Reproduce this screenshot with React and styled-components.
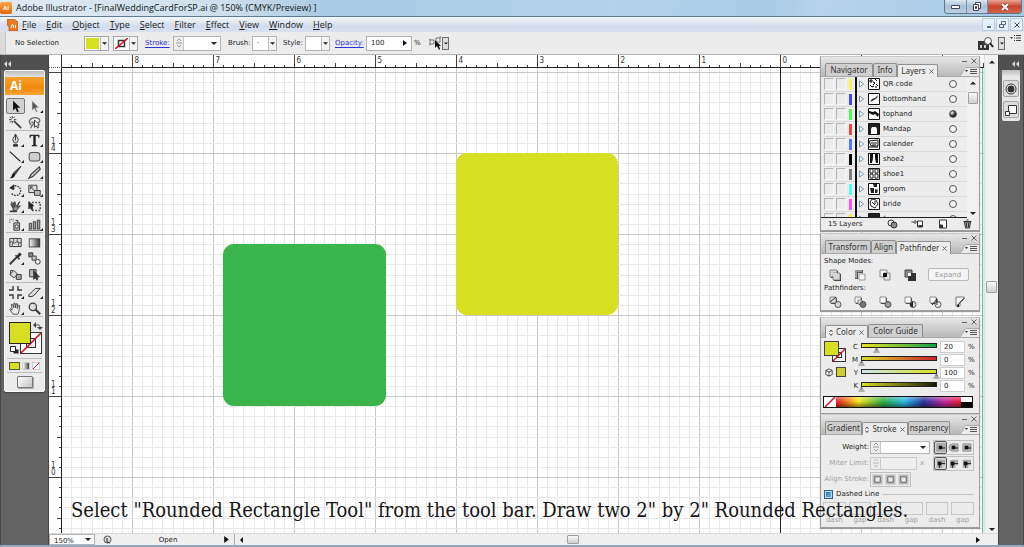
import React, { useLayoutEffect, useRef, useState } from "react";
import styled, { createGlobalStyle, css } from "styled-components";

const Global = createGlobalStyle`
  *, *::before, *::after { box-sizing: border-box; }
  html, body, #root { height: 100%; margin: 0; }
  body { font: 7px/12px "DejaVu Sans", sans-serif; color: #1c1c1c; overflow: hidden; }
  button, input, select { font: inherit; color: inherit; margin: 0; padding: 0; border: 0; background: none; }
  svg { display: block; flex: none; }
  h1, ul { margin: 0; padding: 0; font: inherit; list-style: none; }
`;

const lime = "#d7df23";
const green = "#39b54a";

/* ---------- shell ---------- */

const Window = styled.div`
  position: relative;
  display: flex;
  flex-direction: column;
  min-height: 100vh;
  background: #ebebeb;
`;

const TitleBar = styled.header`
  display: flex;
  align-items: center;
  gap: 4px;
  height: 17px;
  border-bottom: 1px solid #5e7a94;
  background: linear-gradient(100deg, #dfe9f2 0, #cfdfec 22%, #a8cae4 32%, #b3d3ec 60%, #a9cbe6 75%, #b6d4ec 80%, #a5c8e5 100%);
  font: 9px/14px "Open Sans", sans-serif;
  color: #101820;
`;

const AppBadge = styled.span`
  width: 12px;
  height: 12px;
  border-radius: 2px;
  background: linear-gradient(#f7a548, #e2680c);
  color: #fff;
  font: bold 6px/12px "Open Sans", sans-serif;
  text-align: center;
`;

const Title = styled.h1`
  flex: 1;
  white-space: nowrap;
`;

const WindowButtons = styled.div`
  display: flex;
  align-self: flex-start;
  margin-right: 2px;
  border: 1px solid #5f7487;
  border-top: 0;
  border-radius: 0 0 4px 4px;
  overflow: hidden;
`;

const WindowButton = styled.button`
  display: grid;
  place-items: center;
  width: ${(p) => (p.$close ? 34 : 21)}px;
  height: 13px;
  border-left: ${(p) => (p.$first ? 0 : "1px solid #7b90a5")};
  background: ${(p) =>
    p.$close
      ? "linear-gradient(#e9a595, #c9442b 50%, #d2664c)"
      : "linear-gradient(#dbe7f2, #a9bfd5 50%, #bdd2e6)"};
`;

const MenuBar = styled.nav`
  display: flex;
  align-items: center;
  height: 15px;
  padding: 0 1px 0 7px;
  background: linear-gradient(#f4f8fd, #d4dcec 60%, #d9e1f0);
  font: 9px/14px "Open Sans", sans-serif;
`;

const Menus = styled.ul`
  display: flex;
  flex: 1;
  gap: 10px;
  padding-left: 4px;
`;

const MenuItem = styled.button`
  line-height: 14px;
  &::first-letter { text-decoration: underline; }
`;

const DocButton = styled.button`
  display: grid;
  place-items: center;
  width: 13px;
  height: 13px;
  margin-left: 1px;
  border: 1px solid #b5cbe2;
  background: #e6f1fb;
`;

const OptionsBar = styled.div`
  display: flex;
  align-items: center;
  height: 23px;
  padding: 0 2px 0 0;
  border-bottom: 1px solid #b4b4b4;
  background: #ececec;
`;

const Grip = styled.span`
  align-self: stretch;
  width: 6px;
  margin-right: 9px;
  border-right: 1px solid #c8c8c8;
  background: #dcdcdc;
`;

const OptionLabel = styled.label`
  width: ${(p) => p.$w}px;
  white-space: nowrap;
  ${(p) => p.$link && css`
    color: #2734d8;
    text-decoration: underline;
    text-underline-offset: 2px;
  `}
`;

const SwatchPicker = styled.button`
  display: flex;
  width: 25px;
  height: 15px;
  margin-right: ${(p) => p.$gap}px;
  border: 1px solid #a9a9a9;
  background: #fff;
`;

const SwatchFace = styled.span`
  display: grid;
  place-items: center;
  align-self: stretch;
  flex: 1;
  border: 1px solid #fff;
  background: ${(p) => p.$fill || "#fff"};
`;

const ArrowBox = styled.span`
  display: grid;
  place-items: center;
  align-self: stretch;
  width: 8px;
  border-left: 1px solid #bdbdbd;
  background: #f3f3f3;
`;

const Combo = styled.span`
  display: flex;
  align-items: center;
  width: ${(p) => p.$w}px;
  height: ${(p) => p.$h || 15}px;
  margin-right: ${(p) => p.$gap || 0}px;
  border: 1px solid ${(p) => (p.$off ? "#cacaca" : "#b2b2b2")};
  background: ${(p) => (p.$off ? "#eeeeee" : "#fff")};
  & > select, & > input { flex: 1; width: 0; min-width: 0; height: 100%; padding-left: 4px; appearance: none; }
`;

const Spin = styled.span`
  display: grid;
  place-items: center;
  align-self: stretch;
  width: 10px;
  margin-right: 2px;
  border-right: 1px solid #c8c8c8;
  background: #ededed;
`;

const TinyDrop = styled.button`
  display: grid;
  place-items: center;
  width: 7px;
  height: 13px;
  border: 1px solid #6d6d6d;
  background: #dedede;
`;

const Spacer = styled.span`
  flex: ${(p) => p.$grow || 1};
`;

const Body = styled.div`
  display: flex;
  flex: 1;
  min-height: 0;
`;

const TaskEdge = styled.div`
  height: 2px;
  background: #93a9bd;
`;

/* ---------- left dock ---------- */

const Dock = styled.aside`
  width: ${(p) => p.$w}px;
  flex: none;
  padding: 0 3px;
  border-left: 1px solid #474747;
  border-right: 1px solid #474747;
  background: #636363;
`;

const DockHead = styled.div`
  display: flex;
  align-items: center;
  justify-content: ${(p) => (p.$right ? "flex-end" : "flex-start")};
  height: 15px;
  margin: 0 -3px;
  padding: 2px 3px 0;
  background: #505050;
`;

const ToolPanel = styled.div`
  border: 1px solid #f8f8f8;
  border-radius: 2px;
  background: #ebebeb;
  box-shadow: 0 1px 1px #444;
`;

const PanelGrip = styled.div`
  height: 6px;
  background: linear-gradient(#bdbdbd, #e2e2e2);
`;

const Brand = styled.div`
  height: 18px;
  margin-bottom: 2px;
  padding-left: 5px;
  background: linear-gradient(#f7a12c, #f28a0a 60%, #f7a63c);
  color: #fff;
  font: bold 12px/18px "Open Sans", sans-serif;
`;

const ToolGroup = styled.div`
  display: grid;
  grid-template-columns: 19px 19px;
  justify-content: center;
  margin: 0 1px;
  padding: 1px 0 0;
  border-bottom: 1px solid #bcbcbc;
`;

const Tool = styled.button`
  position: relative;
  display: grid;
  place-items: center;
  height: 16px;
  border-radius: 2px;
  ${(p) => p.$on && css`
    border: 1px solid #777;
    background: #d2d2d2;
  `}
  ${(p) => p.$more && css`
    &::after {
      content: "";
      position: absolute;
      right: 1px;
      bottom: 1px;
      border-left: 3px solid transparent;
      border-bottom: 3px solid #222;
    }
  `}
`;

const PaintArea = styled.div`
  display: grid;
  place-items: center;
  height: 42px;
  margin: 0 2px;
  border-bottom: 1px solid #bcbcbc;
`;

const PaintModes = styled.div`
  display: flex;
  justify-content: space-evenly;
  align-items: center;
  height: 14px;
  margin: 0 2px;
  border-bottom: 1px solid #bcbcbc;
`;

const PaintMode = styled.button`
  width: ${(p) => (p.$on ? 11 : 8)}px;
  height: 8px;
  border: 1px solid ${(p) => (p.$on ? "#555" : "#ccc")};
  background: ${(p) => p.$bg};
`;

const ScreenModeRow = styled.div`
  display: grid;
  place-items: center;
  height: 18px;
`;

const ScreenMode = styled.button`
  width: 16px;
  height: 12px;
  border: 1px solid #777;
  border-radius: 1px;
  background: linear-gradient(135deg, #fff, #c4c4c4);
  box-shadow: 1px 1px 0 #aaa;
`;

/* ---------- document ---------- */

const Document = styled.main`
  position: relative;
  display: grid;
  grid-template: 13px 1fr 12px / 13px 1fr 14px;
  flex: 1;
  min-width: 0;
  min-height: 490px;
  background: #fff;
`;

const RulerCorner = styled.span`
  border-right: 1px solid #333;
  border-bottom: 1px dotted #555;
`;

const CanvasCell = styled.div`
  position: relative;
  min-width: 0;
  min-height: 0;
  overflow: hidden;
  & > svg { position: absolute; inset: 0; width: 100%; height: 100%; font: 8px "DejaVu Sans Condensed", sans-serif; }
`;

const ScrollColumn = styled.div`
  display: flex;
  flex-direction: column;
  align-items: center;
  grid-row: 1 / 3;
  grid-column: 3;
  padding: 5px 0 2px;
  border-left: 1px solid #e2e2e2;
  background: #f1f1f1;
`;

const Thumb = styled.span`
  width: ${(p) => p.$w}px;
  height: ${(p) => p.$h}px;
  border: 1px solid #9f9f9f;
  border-radius: 1px;
  background: linear-gradient(#fafafa, #cfcfcf);
`;

const StatusBar = styled.footer`
  grid-column: 1 / 4;
  display: flex;
  align-items: center;
  border-top: 1px solid #dadada;
  background: #efefef;
`;

const StatusText = styled.span`
  flex: none;
  width: 112px;
  text-align: center;
`;

const ScrollRow = styled.div`
  display: flex;
  flex: 1;
  align-items: center;
  align-self: stretch;
  margin-left: 5px;
  padding: 0 18px 0 4px;
  border-left: 1px solid #aaa;
`;

const Caption = styled.p`
  position: absolute;
  left: 71px;
  bottom: 23px;
  margin: 0;
  color: #161616;
  font: 20px/28px "DejaVu Serif Condensed", "DejaVu Serif", serif;
  white-space: nowrap;
  pointer-events: none;
`;

/* ---------- floating panels ---------- */

const Floating = styled.div`
  position: absolute;
  top: 1px;
  right: 18px;
  display: flex;
  flex-direction: column;
  width: 160px;
`;

const Panel = styled.section`
  height: ${(p) => p.$h}px;
  margin-bottom: ${(p) => p.$gap || 0}px;
  border: 1px solid #9e9e9e;
  border-top-color: #c9c9c9;
  background: #ececec;
  box-shadow: 0 1px 1px #999;
`;

const PanelHead = styled.div`
  display: flex;
  align-items: flex-end;
  height: 20px;
  padding-left: 4px;
  border-bottom: 1px solid #a8a8a8;
  background: linear-gradient(#e6e6e6, #b9b9b9);
`;

const Tab = styled.button`
  display: flex;
  align-items: center;
  justify-content: center;
  gap: 3px;
  width: ${(p) => p.$w}px;
  height: 13px;
  margin-bottom: ${(p) => (p.$on ? -1 : 0)}px;
  border: 1px solid #8f8f8f;
  border-bottom: 0;
  border-radius: 2px 2px 0 0;
  background: ${(p) => (p.$on ? "#ececec" : "#cfcfcf")};
  color: #333;
  font: 8px/12px "Noto Sans", sans-serif;
  white-space: nowrap;
`;

const HeadTools = styled.div`
  display: flex;
  flex-direction: column;
  align-items: flex-end;
  justify-content: space-between;
  align-self: stretch;
  flex: 1;
  padding-top: 1px;
  & > :first-child { margin-right: 2px; }
`;

const Layers = styled.div`
  display: flex;
  height: 141px;
`;

const LayerList = styled.ul`
  flex: 1;
  padding-left: 3px;
  overflow: hidden;
  border-bottom: 1px solid #222;
`;

const LayerRow = styled.li`
  display: flex;
  align-items: center;
  height: 15px;
  border-bottom: 1px solid #d9d9d9;
`;

const LayerToggle = styled.input`
  appearance: none;
  width: 10px;
  height: 12px;
  margin-right: 2px;
  border: 1px solid #b5b5b5;
  border-right-color: #f8f8f8;
  border-bottom-color: #f8f8f8;
`;

const LayerTint = styled.span`
  width: 3px;
  height: 11px;
  margin-left: 1px;
  background: ${(p) => p.$c};
`;

const LayerArrow = styled.button`
  display: grid;
  place-items: center;
  width: 10px;
  height: 15px;
  margin: 0 3px 0 3px;
  border-left: 2px solid #111;
`;

const LayerName = styled.span`
  flex: 1;
  padding-left: 3px;
`;

const LayerTarget = styled.button`
  width: 8px;
  height: 8px;
  margin-right: 10px;
  border: 1px solid #555;
  border-radius: 50%;
  background: ${(p) => (p.$on ? "radial-gradient(circle at 35% 30%, #fff, #222 55%)" : "#f4f4f4")};
`;

const ListScroll = styled.div`
  display: flex;
  flex-direction: column;
  align-items: center;
  width: 12px;
  padding: 4px 0 3px;
  background: #f0f0f0;
`;

const LayerFoot = styled.div`
  display: flex;
  align-items: center;
  gap: 12px;
  height: 12px;
  padding: 0 18px 0 7px;
  white-space: nowrap;
`;

const PathfinderBody = styled.div`
  display: grid;
  grid-template-columns: repeat(6, 25px);
  align-items: center;
  justify-items: center;
  row-gap: 1px;
  padding: 1px 4px 0 2px;
`;

const PathHeading = styled.span`
  grid-column: 1 / -1;
  justify-self: start;
  padding-left: 1px;
`;

const IconButton = styled.button`
  display: grid;
  place-items: center;
  height: 13px;
  min-width: 13px;
  ${(p) => p.$on && css`
    border: 1px solid #555;
    border-radius: 2px;
    background: #d4d4d4;
  `}
`;

const Expand = styled.button`
  grid-column: span 2;
  width: 41px;
  height: 13px;
  border: 1px solid #b8b8b8;
  border-radius: 2px;
  background: #f4f4f4;
  color: #999;
`;

const ColorBody = styled.div`
  display: grid;
  grid-template-columns: 24px 1fr;
  padding: 2px 4px 0 3px;
`;

const ColorProxy = styled.div`
  display: flex;
  flex-direction: column;
  gap: 4px;
`;

const GamutRow = styled.div`
  display: flex;
  align-items: center;
  gap: 3px;
  padding-left: 1px;
`;

const GamutColor = styled.button`
  width: 10px;
  height: 10px;
  border: 1px solid #444;
  background: #cfce2c;
`;

const Channel = styled.div`
  display: grid;
  grid-template-columns: 8px 82px 25px 1fr;
  align-items: center;
  height: 13px;
  padding-left: 2px;
`;

const ChannelLabel = styled.label`
  text-align: right;
`;

const Percent = styled.span`
  padding-left: 3px;
`;

const Slider = styled.input`
  appearance: none;
  width: 82px;
  height: 12px;
  &::-webkit-slider-runnable-track {
    height: 12px;
    background:
      linear-gradient(90deg, ${(p) => p.$from}, ${(p) => p.$to}) 4px 3px / 74px 3px no-repeat,
      linear-gradient(#222, #222) 3px 2px / 76px 5px no-repeat;
  }
  &::-webkit-slider-thumb {
    appearance: none;
    width: 7px;
    height: 5px;
    margin-top: 7px;
    background: linear-gradient(#777 40%, #aaa 40% 80%, #777 80%);
    clip-path: polygon(50% 0, 100% 100%, 0 100%);
  }
`;

const Field = styled.input`
  && {
    width: 100%;
    height: 12px;
    padding-left: 3px;
    border: 1px solid #cfcfcf;
    background: #fff;
  }
`;

const Spectrum = styled.div`
  display: flex;
  height: 12px;
  margin: 4px 6px 0 2px;
  border: 1px solid #111;
`;

const SpectrumRamp = styled.span`
  flex: 1;
  background:
    linear-gradient(rgba(255,255,255,.35), transparent 45%, rgba(0,0,0,.45)),
    linear-gradient(90deg, #ea1c2c, #f7e51d 18%, #2fae4a 38%, #2fb9e8 55%, #2b36a0 70%, #c62b9c 87%, #ec1c34);
`;

const BlackWhite = styled.span`
  width: 11px;
  background: linear-gradient(#fff 50%, #000 50%);
`;

const StrokeBody = styled.div`
  display: flex;
  flex-direction: column;
  gap: 2px;
  padding: 5px 5px 0 2px;
`;

const StrokeRow = styled.div`
  display: flex;
  align-items: center;
  height: 14px;
  color: ${(p) => (p.$off ? "#a2a2a2" : "#1c1c1c")};
`;

const StrokeLabel = styled.label`
  width: 46px;
  margin-right: 1px;
  text-align: right;
  white-space: nowrap;
`;

const JoinGroup = styled.span`
  display: flex;
  margin-left: ${(p) => (p.$push ? "auto" : 0)};
  border: 1px solid #c0c0c0;
`;

const Dashed = styled.label`
  display: flex;
  align-items: center;
  gap: 3px;
  height: 12px;
  &::after { content: ""; flex: 1; border-top: 1px solid #c4c4c4; }
`;

const DashedBox = styled.input`
  && {
    appearance: none;
    width: 9px;
    height: 9px;
    margin-left: 1px;
    border: 1px solid #3a5f80;
    background: linear-gradient(135deg, #2a6aa0, #5fc3ee);
    box-shadow: inset 0 0 0 1px #b8dcf0;
  }
`;

const DashGrid = styled.div`
  display: grid;
  grid-template-columns: repeat(6, 1fr);
  gap: 3px;
`;

const DashCell = styled.label`
  display: flex;
  flex-direction: column;
  color: #a2a2a2;
  text-align: center;
  line-height: 11px;
`;

const DashInput = styled.input`
  && {
    width: 100%;
    height: 13px;
    border: 1px solid #c6c6c6;
  }
`;

/* ---------- right dock ---------- */

const RightGroup = styled.div`
  display: flex;
  flex-direction: column;
  align-items: center;
  gap: 4px;
  padding-bottom: 3px;
  border-radius: 2px;
  background: #e6e6e6;
  & > :first-child { align-self: stretch; }
`;

const RightButton = styled.button`
  display: grid;
  place-items: center;
  width: 16px;
  height: 17px;
  border: 1px solid #a5a5a5;
  border-radius: 2px;
  background: #dcdcdc;
`;

/* ---------- drawings ---------- */

const Down = ({ s = 5, c = "#222" }) => (
  <svg width={s} height="3" viewBox="0 0 6 3"><path d="M0 0h6L3 3z" fill={c} /></svg>
);
const Up = () => <svg width="6" height="4" viewBox="0 0 6 3"><path d="M0 3h6L3 0z" fill="#222" /></svg>;
const Side = ({ left, s = 5 }) => (
  <svg width={s} height={s + 2} viewBox="0 0 4 6"><path d={left ? "M4 0v6L1 3z" : "M0 0v6l4-3z"} fill="#111" /></svg>
);
const SpinMark = ({ off }) => (
  <svg width="6" height="10" viewBox="0 0 6 10" fill="none" stroke={off ? "#aaa" : "#888"}>
    <path d="M1 3l2-2 2 2M1 7l2 2 2-2M0 5h6" strokeWidth=".8" />
  </svg>
);
const Cross = ({ c = "#555", s = 5 }) => (
  <svg width={s} height={s} viewBox="0 0 6 6"><path d="M.5.5l5 5M5.5.5l-5 5" stroke={c} /></svg>
);
const Chevrons = () => (
  <svg width="8" height="6" viewBox="0 0 8 6"><path d="M3 0v6L0 3zM7 0v6L4 3z" fill="#dcdcdc" /></svg>
);
const MenuMark = () => (
  <svg width="20" height="9" viewBox="0 0 20 9">
    <path d="M0 9c4 0 4-9 8-9h12v9z" fill="#ececec" />
    <path d="M0 9c4 0 4-8.500 8-8.500h12" fill="none" stroke="#aaa" />
    <path d="M6 3h3L7.500 5z" fill="#333" /><path d="M11 2.500h7M11 4.500h7M11 6.500h7" stroke="#555" />
  </svg>
);

const dark = { fill: "none", stroke: "#3c3c3c", strokeWidth: 1.2 };
const tools = {
  selection: <path d="M5 1v12l3-3 2 5 2-1-2-4.500h4z" fill="#111" />,
  direct: <path d="M5 1v12l3-3 2 5 1.500-.7-2-4.800h4z" fill="#555" stroke="#ddd" strokeWidth=".6" />,
  wand: <g {...dark}><path d="M6 6l9 9" strokeWidth="2" /><path d="M4 0v3M4 6v3M0 4.500h3M6 4.500h3M1 1l2 2M7 1L5.500 2.500M1 8l2-2" /></g>,
  lasso: <g {...dark}><path d="M4 11C-1 7 3 2 9 2c6 0 7 5 3 7M4 8c2-1 4 1 2 3s-3 2-2 4" strokeWidth="1.600" stroke="#666" /><path d="M8 5v9l2-2 2 3 1-1-1-3h2z" fill="#fff" /></g>,
  pen: <g {...dark}><path d="M8 0v8M8 0L4.500 7l2 4h3l2-4z" fill="#ddd" /><path d="M5.500 13h5v2h-5z" fill="#222" /></g>,
  type: <path d="M2 1h12v4h-1c0-2-1-3-3.500-3v11c0 .7.500 1 2 1.200V15h-7v-.8c1.500-.2 2-.5 2-1.200V2C4 2 3 3 3 5H2z" fill="#222" />,
  line: <path d="M1 2l13 12" stroke="#222" strokeWidth="1.500" />,
  rect: <rect x="1.500" y="3" width="13" height="10.500" rx="3" fill="#cfcfcf" stroke="#555" strokeWidth="1.300" />,
  brush: <g><path d="M15 0L6 8l2 2z" fill="#555" stroke="#222" /><path d="M6 8l2 2c-1 4-4 5-7 5 3-2 2-5 5-7z" fill="#222" /></g>,
  pencil: <path d="M14 1L4 10l-3 5 5-2 9-9z" fill="#c8c8c8" stroke="#333" strokeWidth="1.300" />,
  rotate: <g {...dark}><path d="M4 4a6 6 0 1 1-1 7" strokeDasharray="2 1.300" strokeWidth="1.700" /><path d="M1 5l5-4v6z" fill="#222" /></g>,
  scale: <g {...dark}><path d="M1 1.500h10v9H1z" fill="#ddd" /><path d="M8 8h7v6H8z" fill="#bbb" /><path d="M3 3.500l5 5M3 3.500v3M3 3.500h3" /></g>,
  warp: <g {...dark}><path d="M2 5l3 5-2-8M5 3l2 6V2l2 6 4-6-3 7 4-2-5 6H5z" fill="#999" /><path d="M1 14h9" strokeWidth="2" /></g>,
  free: <g {...dark}><path d="M5 3h10v10H5z" strokeDasharray="2 2" strokeWidth="1.700" /><path d="M1 2l6 5-2 1 1 4-2 0-1-3-2 2z" fill="#222" /></g>,
  symbol: <g {...dark}><path d="M6 6h7v9H6zM8 3h3v3" fill="#bbb" /><path d="M1 1v5M3 1v2M5 1v3" strokeDasharray="1 1" /><circle cx="9.500" cy="10.500" r="2" fill="#eee" /></g>,
  graph: <g fill="#999" stroke="#333"><path d="M1.500 6.500h3v7h-3zM6.500 4.500h3v9h-3zM11.500 2.500h3v11h-3zM0 15h16" /></g>,
  mesh: <g {...dark}><path d="M1 3h14v10H1z" fill="#ddd" /><path d="M5 3c3 4-3 6 0 10M11 3c-3 4 3 6 0 10M1 8c4-3 4 3 7 0s4 2 7 0" /></g>,
  gradient: <g><rect x="1.500" y="3.500" width="13" height="10" fill="url(#toolShade)" stroke="#333" /></g>,
  dropper: <g {...dark}><path d="M10 6L3 13l-2 2" strokeWidth="2.500" /><path d="M8 4l5 5" strokeWidth="2" /><path d="M10 5l3-4 2 2-4 4z" fill="#222" /></g>,
  blend: <g {...dark}><path d="M1 1h5v5H1z" fill="#888" /><path d="M5 5h5v5H5z" fill="#ccc" /><circle cx="12" cy="12" r="3" fill="#eee" /></g>,
  bucket: <g {...dark}><path d="M1 8l5-5 5 5-5 4z" fill="#ddd" /><path d="M9 8h6v6H9z" fill="#aaa" /><path d="M2 8V3h3" /></g>,
  livesel: <g {...dark}><path d="M2 2h8v9H2z" fill="#bbb" /><path d="M7 3v11l2-2 2 3 1-1-1-3h3z" fill="#333" /></g>,
  slice: <g {...dark} strokeWidth="1.700"><path d="M5 0v5H0M11 0v5h5M5 16v-5H0M11 16v-5h5" /></g>,
  eraser: <path d="M1 11l8-8h6l-7 8-3 2H1z" fill="#ddd" stroke="#333" strokeWidth="1.200" />,
  hand: <path d="M5 15l-4-6 1-1 2 2-1-7 1.500 0L6 7V1.500h1.500L8 7l1-5 1.500.3L10 8l2-4 1.300.6L12 12l-1 3z" fill="#eee" stroke="#333" />,
  zoom: <g {...dark}><circle cx="6" cy="6" r="4.500" fill="#ddd" strokeWidth="1.500" /><path d="M9 9l6 6" strokeWidth="2.700" /></g>,
};

const ToolIcon = ({ name }) => (
  <svg width="13" height="13" viewBox="0 0 16 16">
    <defs><linearGradient id="toolShade"><stop offset="0" stopColor="#fff" /><stop offset="1" stopColor="#333" /></linearGradient></defs>
    {tools[name]}
  </svg>
);

const toolGroups = [
  ["selection", "direct+", "wand", "lasso"],
  ["pen+", "type+", "line+", "rect+", "brush", "pencil+"],
  ["rotate+", "scale+", "warp+", "free"],
  ["symbol+", "graph+"],
  ["mesh", "gradient", "dropper+", "blend", "bucket", "livesel"],
  ["slice+", "eraser+", "hand+", "zoom"],
];

const thumbs = {
  qr: <path d="M2 2h2v2H2zM7 1l2 2M5 4l2 1-2 2M8 6l2 2M2 7l2 2 2-1M7 9h2" stroke="#000" fill="none" />,
  up: <path d="M2 9l2-3 3-1 3-3-1 3-3 2-2 1z" fill="#222" />,
  down: <path d="M1 3l4 1 2-1 4 3-1 3-3-3-2 1-4-2z" fill="#111" />,
  gate: <path d="M1 1h10v10H9V6L8 4H4L3 6v5H1z" fill="#222" />,
  cal: <path d="M1 3l9-1v6H3zM3 5h6M4 7h4M1 9h9" stroke="#111" fill="none" />,
  shoes: <path d="M2 1h3v4L4 10H2zM7 1h3v9H8L7 5z" fill="#111" />,
  shoesLine: <path d="M2 1h3v4H2zM2 6h3v4H2zM7 1h3v4H7zM7 6h3v4H7z" fill="none" stroke="#222" />,
  man: <path d="M5 1h4v3H6zM2 5h4v5H3zM7 6l3 1-1 3H7z" fill="#222" />,
  woman: <path d="M4 1l4 1 2 4-3 4-4-2-1-4zM4 4l3 3M7 3v3" fill="none" stroke="#222" />,
};

const layers = [
  ["QR code", "#fbf04a", "qr"],
  ["bottomhand", "#3f4fe0", "up"],
  ["tophand", "#4aff4f", "down", true],
  ["Mandap", "#f2443f", "gate"],
  ["calender", "#4f7cff", "cal"],
  ["shoe2", "#000000", "shoes"],
  ["shoe1", "#7f7f7f", "shoesLine"],
  ["groom", "#4bfff0", "man"],
  ["bride", "#ff4ff8", "woman"],
  ["f", "#fbf04a", "gate"],
];

const Square = ({ x, y, s = 6, fill }) => (
  <>
    <path d={`M${x + 1} ${y + 1}h${s}v${s}h-${s}z`} fill="#333" />
    <path d={`M${x} ${y}h${s}v${s}h-${s}z`} fill={fill} stroke="#777" strokeWidth=".8" />
  </>
);
const Disc = ({ fill }) => <circle cx="9" cy="8.500" r="3" fill={fill} stroke="#555" />;

const shapes = {
  add: <><Square x={1} y={1} s={7} fill="#d6d6d6" /><Square x={4} y={4} s={7} fill="#d6d6d6" /><path d="M2 4h6v4H5z" fill="#d6d6d6" /></>,
  cut: <><path d="M1 1h8v3H4v6H1z" fill="#555" /><path d="M1 1h7v2H3v6H1z" fill="#999" /><path d="M5 5h6v6H5z" fill="#f7f7f7" stroke="#999" /></>,
  meet: <><path d="M1 1h7v7H1z" fill="#f3f3f3" stroke="#888" /><path d="M5 4h6v7H5z" fill="#e3e3e3" stroke="#888" /><path d="M4 4h4v4H4z" fill="#111" /></>,
  omit: <><path d="M1 1h7v7H1z" fill="#888" stroke="#444" /><path d="M4 4h8v8H4z" fill="#333" /><path d="M4 4h3v3H4z" fill="#fff" /></>,
  divide: <><Square x={1} y={1} fill="#ddd" /><Disc fill="#d8d8d8" /><path d="M1 6l6-5" stroke="#222" /></>,
  trim: <><Square x={1} y={1} fill="#f2f2f2" /><Square x={4} y={4} s={4} fill="#ddd" /><Disc fill="#777" /></>,
  merge: <><Square x={1} y={1} fill="#fafafa" /><Disc fill="#999" /></>,
  crop: <><Square x={1} y={1} fill="#fafafa" /><Disc fill="#ddd" /><path d="M9 5v6a3 3 0 0 1-3-3z" fill="#222" /></>,
  outline: <><Square x={1} y={1} fill="#fafafa" /><Disc fill="#eee" /><path d="M3 9l5-6v6" fill="none" stroke="#222" /></>,
  minus: <><path d="M2 1h8v2L6 6v4H2z" fill="#fafafa" stroke="#777" /><path d="M3 11V9l7-7h1L5 8v3z" fill="#222" /></>,
};

const Squares = ({ kind }) => <svg width="13" height="12" viewBox="0 0 13 12">{shapes[kind]}</svg>;

const StrokeEnd = ({ kind }) => (
  <svg width="11" height="11" viewBox="0 0 12 12">
    {kind < 3 ? (
      <>
        <path d={kind === 1 ? "M11 2H5a4 4 0 0 0 0 8h6z" : "M2 2h9v8H2z"} fill="#b4b4b4" stroke="#999" />
        <path d="M4 4h4v4H4zM6 6h5v1H6z" fill="#111" />
      </>
    ) : (
      <>
        <path d={kind === 4 ? "M2 11V5a3 3 0 0 1 3-3h6v6H8v3z" : "M2 2h9v6H8v3H2z"} fill="#aaa" />
        <path d="M5 11V6h6" stroke="#222" fill="none" /><path d="M3 4h4v4H3z" fill="#111" />
      </>
    )}
  </svg>
);

const AlignMark = () => (
  <svg width="11" height="11" viewBox="0 0 12 12" fill="none"><path d="M2 2h8v8H2z" stroke="#bbb" strokeWidth="3" /><path d="M3 3h6v6H3z" stroke="#666" /></svg>
);

const FootMark = ({ kind }) => (
  <svg width="13" height="10" viewBox="0 0 12 10" fill="none" stroke="#333">
    {kind === 0 && <><circle cx="4.500" cy="4" r="3" /><circle cx="7.500" cy="6" r="3" fill="#888" /></>}
    {kind === 1 && <><path d="M0 3h4M3 1l2 2-2 2" /><path d="M6 2h5v6H6z" fill="#fff" /><path d="M7 7h4" strokeWidth="2" /></>}
    {kind === 2 && <><path d="M3 1h7v8H3z" fill="#fff" /><path d="M3 9V6h3v3" fill="#333" /></>}
    {kind === 3 && <><path d="M3 3h6l-1 6H4z" fill="#aaa" /><path d="M2 2.500h8M5 1h2M5 4v4M7 4v4" /></>}
  </svg>
);

const PaintProxy = () => (
  <svg width="36" height="34" viewBox="0 0 36 34">
    <rect x="13.500" y="11.500" width="21" height="21" fill="#fff" stroke="#333" />
    <rect x="19.500" y="17.500" width="9" height="9" fill="#eee" stroke="#333" />
    <path d="M14 32L34 12" stroke="#d0142c" strokeWidth="1.700" />
    <rect x="2.500" y="1.500" width="21" height="21" fill={lime} stroke="#222" />
    <path d="M28 4h3c2 0 2 1 2 3" fill="none" stroke="#444" />
    <path d="M29 1v6l-3-3zM30 6h6l-3 3z" fill="#444" />
    <path d="M6.500 28.500h5v4h-5z" fill="#222" /><path d="M3.500 25.500h5v5h-5z" fill="#fff" stroke="#222" />
  </svg>
);

/* Rulers and grid: eight divisions to the inch, origin at the page edge. */
const division = 81 / 8;
const originX = 718;
const originY = 85;
const at = (origin, step) => Math.round(origin + step * division) + 0.5;

function useSize() {
  const ref = useRef(null);
  const [size, setSize] = useState([0, 0]);
  useLayoutEffect(() => {
    const read = () => setSize([ref.current.clientWidth, ref.current.clientHeight]);
    read();
    const watch = new ResizeObserver(read);
    watch.observe(ref.current);
    return () => watch.disconnect();
  }, []);
  return [ref, size];
}

function stepsIn(origin, length) {
  const first = Math.ceil(-origin / division);
  const last = Math.floor((length - origin) / division);
  return Array.from({ length: Math.max(0, last - first + 1) }, (_, i) => first + i);
}

const tickStart = (n) => (n % 8 === 0 ? 0 : n % 4 === 0 ? 8 : 10);

function HRuler() {
  const [ref, [w]] = useSize();
  return (
    <CanvasCell ref={ref}>
      <svg aria-hidden="true">
        {stepsIn(originX, w).map((n) => {
          const x = at(originX, n);
          return (
            <g key={n}>
              <path d={`M${x} ${tickStart(n)}V13`} stroke="#444" />
              {n % 8 === 0 && x < w - 8 && <text x={x + 2} y="8" fill="#333">{Math.abs(n / 8)}</text>}
            </g>
          );
        })}
        <path d="M0 12.500H4000" stroke="#222" />
      </svg>
    </CanvasCell>
  );
}

function VRuler() {
  const [ref, [, h]] = useSize();
  return (
    <CanvasCell ref={ref}>
      <svg aria-hidden="true">
        {stepsIn(originY, h).map((n) => {
          const y = at(originY, n);
          return (
            <g key={n}>
              <path d={`M${tickStart(n)} ${y}H13`} stroke="#444" />
              {n % 8 === 0 && y > 20 && [...String(14 - n / 8)].map((d, i) => (
                <text key={i} x="2" y={y - 10 + i * 7} fill="#333">{d}</text>
              ))}
            </g>
          );
        })}
        <path d="M12.500 0V4000" stroke="#222" />
      </svg>
    </CanvasCell>
  );
}

function Artwork() {
  const [ref, [w, h]] = useSize();
  const majorsLast = (a) => [...a].sort((m, n) => (m % 8 === 0) - (n % 8 === 0));
  const tone = (n) => (n % 8 === 0 ? "#c9c9c9" : "#e9e9e9");
  return (
    <CanvasCell ref={ref}>
      <svg role="img" aria-label="Artboard">
        {majorsLast(stepsIn(originX, w)).map((n) => <path key={`c${n}`} d={`M${at(originX, n)} 0V${h}`} stroke={tone(n)} />)}
        {majorsLast(stepsIn(originY, h)).map((n) => <path key={`r${n}`} d={`M0 ${at(originY, n)}H${w}`} stroke={tone(n)} />)}
        <path d={`M718.500 0V${h}`} stroke="#222" />
        <path d={`M920.500 0V${h}`} stroke="#5fc0a0" />
        <rect x="394" y="85" width="162" height="162" rx="11" fill={lime} />
        <rect x="161" y="176" width="163" height="162" rx="11" fill={green} />
      </svg>
    </CanvasCell>
  );
}

/* ---------- parts ---------- */

function Head({ children }) {
  return (
    <PanelHead role="tablist">
      {children}
      <HeadTools>
        <svg width="15" height="6" viewBox="0 0 15 6"><path d="M0 3.500h5M9.500.5l5 5M14.500.5l-5 5" stroke="#666" /></svg>
        <MenuMark />
      </HeadTools>
    </PanelHead>
  );
}

const ActiveTab = ({ w, dot, children }) => (
  <Tab role="tab" $on $w={w}>
    {dot && <svg width="4" height="7" viewBox="0 0 4 7" fill="none" stroke="#555"><path d="M.5 3L2 1l1.500 2M.5 4.500L2 6.500l1.500-2" /></svg>}
    {children}
    <Cross />
  </Tab>
);

function LayersPanel() {
  return (
    <Panel $h={175} $gap={2}>
      <Head>
        <Tab role="tab" $w={48}>Navigator</Tab>
        <Tab role="tab" $w={24}>Info</Tab>
        <ActiveTab w={41}>Layers</ActiveTab>
      </Head>
      <Layers>
        <LayerList>
          {layers.map(([name, color, art, on]) => (
            <LayerRow key={name}>
              <LayerToggle type="checkbox" aria-label={`Show ${name}`} />
              <LayerToggle type="checkbox" aria-label={`Lock ${name}`} />
              <LayerTint $c={color} />
              <LayerArrow aria-label="Expand layer">
                <svg width="5" height="8" viewBox="0 0 5 8"><path d="M.5 1v6l4-3z" fill="#fff" stroke="#5b86a0" strokeWidth=".8" /></svg>
              </LayerArrow>
              <svg width="12" height="12" viewBox="0 0 12 12"><path d="M.5.5h11v11H.5z" fill="#fff" stroke="#111" />{thumbs[art]}</svg>
              <LayerName>{name}</LayerName>
              <LayerTarget aria-label="Target" $on={on} />
            </LayerRow>
          ))}
        </LayerList>
        <ListScroll>
          <Up />
          <svg width="1" height="7" />
          <Thumb $w={10} $h={12} />
          <Spacer />
          <Down s={6} />
        </ListScroll>
      </Layers>
      <LayerFoot>
        <span>15 Layers</span>
        <Spacer />
        {[0, 1, 2, 3].map((k) => <FootMark key={k} kind={k} />)}
      </LayerFoot>
    </Panel>
  );
}

function PathfinderPanel() {
  return (
    <Panel $h={78} $gap={6}>
      <Head>
        <Tab role="tab" $w={46}>Transform</Tab>
        <Tab role="tab" $w={25}>Align</Tab>
        <ActiveTab w={55}>Pathfinder</ActiveTab>
      </Head>
      <PathfinderBody>
        <PathHeading>Shape Modes:</PathHeading>
        {["add", "cut", "meet", "omit"].map((k) => <IconButton key={k} aria-label={k}><Squares kind={k} /></IconButton>)}
        <Expand>Expand</Expand>
        <PathHeading>Pathfinders:</PathHeading>
        {["divide", "trim", "merge", "crop", "outline", "minus"].map((k) => <IconButton key={k} aria-label={k}><Squares kind={k} /></IconButton>)}
      </PathfinderBody>
    </Panel>
  );
}

const channels = [
  ["C", 20, "#e9e61f", "#12a14b"],
  ["M", 0, "#d7df23", "#cf2030"],
  ["Y", 100, "#cfe6ee", "#d9e021"],
  ["K", 0, "#d7df23", "#1a1a08"],
];

function ColorPanel() {
  return (
    <Panel $h={97}>
      <Head>
        <ActiveTab w={43} dot>Color</ActiveTab>
        <Tab role="tab" $w={55}>Color Guide</Tab>
      </Head>
      <ColorBody>
        <ColorProxy>
          <svg width="22" height="23" viewBox="0 0 22 23">
            <rect x="8.500" y="8.500" width="13" height="13" fill="#fff" stroke="#333" />
            <rect x="12.500" y="12.500" width="5" height="5" fill="none" stroke="#333" />
            <path d="M9 21L21 9" stroke="#d0142c" strokeWidth="1.500" />
            <rect x=".5" y="1.500" width="14" height="14" fill={lime} stroke="#444" />
          </svg>
          <GamutRow>
            <svg width="8" height="9" viewBox="0 0 10 10" fill="#fff" stroke="#222"><path d="M5 .5l4 2v5l-4 2-4-2v-5zM1 2.500l4 2 4-2M5 4.500v5" /></svg>
            <GamutColor aria-label="In gamut colour" />
          </GamutRow>
        </ColorProxy>
        <div>
          {channels.map(([c, v, from, to]) => (
            <Channel key={c}>
              <ChannelLabel htmlFor={`ch${c}`}>{c}</ChannelLabel>
              <Slider type="range" min="0" max="100" defaultValue={v} $from={from} $to={to} aria-label={`${c} slider`} />
              <Field id={`ch${c}`} defaultValue={v} />
              <Percent>%</Percent>
            </Channel>
          ))}
        </div>
      </ColorBody>
      <Spectrum>
        <svg width="12" height="10" viewBox="0 0 12 10"><path d="M0 0h12v10H0z" fill="#fff" /><path d="M1 10L11 0" stroke="#d0142c" strokeWidth="1.500" /></svg>
        <SpectrumRamp />
        <BlackWhite />
      </Spectrum>
    </Panel>
  );
}

function StrokePanel() {
  return (
    <Panel $h={114}>
      <Head>
        <Tab role="tab" $w={37}>Gradient</Tab>
        <ActiveTab w={46} dot>Stroke</ActiveTab>
        <Tab role="tab" $w={42}>nsparency</Tab>
      </Head>
      <StrokeBody>
        <StrokeRow>
          <StrokeLabel htmlFor="weight">Weight:</StrokeLabel>
          <Combo $w={60} $h={13}>
            <Spin><SpinMark /></Spin>
            <select id="weight" defaultValue=""><option value="" /></select>
            <Down s={6} />
            <svg width="3" height="1" />
          </Combo>
          <JoinGroup $push>{[0, 1, 2].map((k) => <IconButton key={k} $on={k === 0} aria-label="Cap"><StrokeEnd kind={k} /></IconButton>)}</JoinGroup>
        </StrokeRow>
        <StrokeRow $off>
          <StrokeLabel htmlFor="miter">Miter Limit:</StrokeLabel>
          <Combo $w={47} $h={13} $off $gap={3}>
            <Spin><SpinMark off /></Spin>
            <input id="miter" disabled />
          </Combo>
          x
          <JoinGroup $push>{[3, 4, 5].map((k) => <IconButton key={k} $on={k === 3} aria-label="Join"><StrokeEnd kind={k} /></IconButton>)}</JoinGroup>
        </StrokeRow>
        <StrokeRow $off>
          <StrokeLabel as="span">Align Stroke:</StrokeLabel>
          <JoinGroup>{[0, 1, 2].map((k) => <IconButton key={k} aria-label="Align stroke"><AlignMark /></IconButton>)}</JoinGroup>
        </StrokeRow>
        <Dashed><DashedBox type="checkbox" defaultChecked />Dashed Line</Dashed>
        <DashGrid>
          {["dash", "gap", "dash", "gap", "dash", "gap"].map((t, i) => (
            <DashCell key={i}><DashInput />{t}</DashCell>
          ))}
        </DashGrid>
      </StrokeBody>
    </Panel>
  );
}

const NoneMark = () => (
  <svg width="13" height="11" viewBox="0 0 13 11"><path d="M3.500 2.500h6v6h-6z" fill="none" stroke="#333" strokeWidth="1.500" /><path d="M0 11L13 0" stroke="#d0142c" strokeWidth="1.500" /></svg>
);

export default function App() {
  return (
    <>
      <Global />
      <Window>
        <TitleBar>
          <AppBadge>Ai</AppBadge>
          <Title>Adobe Illustrator - [FinalWeddingCardForSP.ai @ 150% (CMYK/Preview) ]</Title>
          <WindowButtons>
            <WindowButton $first aria-label="Minimize"><svg width="9" height="4"><path d="M.5.5h8v3h-8z" fill="#fff" stroke="#445" /></svg></WindowButton>
            <WindowButton aria-label="Restore"><svg width="8" height="9" fill="#fff" stroke="#445"><path d="M2.500.5h5v6h-5z" /><path d="M.5 2.500h5v6h-5z" /><path d="M2.500 4.500h1v2h-1z" /></svg></WindowButton>
            <WindowButton $close aria-label="Close"><svg width="8" height="8" viewBox="0 0 8 8"><path d="M1 1l6 6M7 1L1 7" stroke="#533" strokeWidth="3" /><path d="M1 1l6 6M7 1L1 7" stroke="#fff" strokeWidth="2" /></svg></WindowButton>
          </WindowButtons>
        </TitleBar>

        <MenuBar>
          <svg width="11" height="12" viewBox="0 0 11 12"><path d="M0 0h7l4 3v9H2V7L0 6z" fill="#ec7a1c" stroke="#a84c08" strokeWidth=".6" /><path d="M4 9l1.500-4L7 9M8.500 6v3" stroke="#fff" fill="none" /></svg>
          <Menus>
            {["File", "Edit", "Object", "Type", "Select", "Filter", "Effect", "View", "Window", "Help"].map((m) => <li key={m}><MenuItem>{m}</MenuItem></li>)}
          </Menus>
          <DocButton aria-label="Minimize document"><svg width="6" height="6"><path d="M1 5h4" stroke="#345" strokeWidth="1.500" /></svg></DocButton>
          <DocButton aria-label="Restore document"><svg width="7" height="7" fill="none" stroke="#567"><path d="M2.500 3V.5h4v3h-2M.5 3.500h4v3h-4z" /></svg></DocButton>
          <DocButton aria-label="Close document"><Cross c="#345" s={6} /></DocButton>
        </MenuBar>

        <OptionsBar>
          <Grip />
          <OptionLabel as="span" $w={69}>No Selection</OptionLabel>
          <SwatchPicker $gap={4} aria-label="Fill"><SwatchFace $fill={lime} /><ArrowBox><Down /></ArrowBox></SwatchPicker>
          <SwatchPicker $gap={7} aria-label="Stroke colour"><SwatchFace><NoneMark /></SwatchFace><ArrowBox><Down /></ArrowBox></SwatchPicker>
          <OptionLabel $link $w={28} htmlFor="optStroke">Stroke:</OptionLabel>
          <Combo $w={48} $gap={7}>
            <Spin><SpinMark /></Spin>
            <select id="optStroke" defaultValue=""><option value="" /></select>
            <Down s={6} />
            <svg width="3" height="1" />
          </Combo>
          <OptionLabel $w={24} htmlFor="optBrush">Brush:</OptionLabel>
          <Combo $w={25} $gap={6}>
            <select id="optBrush" defaultValue="·"><option>·</option></select>
            <ArrowBox><Down /></ArrowBox>
          </Combo>
          <OptionLabel $w={22} htmlFor="optStyle">Style:</OptionLabel>
          <Combo $w={25} $gap={5}>
            <select id="optStyle" defaultValue=""><option value="" /></select>
            <ArrowBox><Down /></ArrowBox>
          </Combo>
          <OptionLabel $link $w={31} htmlFor="optOpacity">Opacity:</OptionLabel>
          <Combo $w={46} $gap={2}>
            <input id="optOpacity" defaultValue="100" />
            <Side s={4} />
            <svg width="4" height="1" />
          </Combo>
          <OptionLabel as="span" $w={15}>%</OptionLabel>
          <svg width="13" height="14" viewBox="0 0 13 14"><path d="M1 4h4v4H1zM7 2h4v4H7zM0 3l2 1M0 9l2-1M11 0l1 2" fill="none" stroke="#777" /><path d="M6 4v8l2-2 2 4 1-1-1-3h2z" fill="#111" /></svg>
          <TinyDrop aria-label="Select similar"><Down s={4} /></TinyDrop>
          <Spacer />
          <svg width="16" height="15" viewBox="0 0 16 15"><path d="M0 5h11v9H0z" fill="#333" /><path d="M2 9h2v3H2zM6 9h2v3H6z" fill="#ccc" /><circle cx="10" cy="5" r="3.500" fill="#f4f4f4" stroke="#555" /><path d="M12 7l3 4" stroke="#222" strokeWidth="2" /></svg>
          <svg width="4" height="1" />
          <TinyDrop aria-label="Go to Bridge"><Down s={4} /></TinyDrop>
          <svg width="17" height="20" viewBox="0 0 17 20"><path d="M5 4h3L6.500 6z" fill="#333" /><path d="M9 2.500h1M11 2.500h5M9 5h1M11 5h5M9 7.500h1M11 7.500h5" stroke="#444" /></svg>
        </OptionsBar>

        <Body>
          <Dock $w={49} aria-label="Tools">
            <DockHead><Chevrons /></DockHead>
            <ToolPanel>
              <PanelGrip />
              <Brand>Ai</Brand>
              {toolGroups.map((group, g) => (
                <ToolGroup key={g}>
                  {group.map((t) => {
                    const name = t.replace("+", "");
                    return <Tool key={t} aria-label={name} $on={name === "selection"} $more={t.endsWith("+")}><ToolIcon name={name} /></Tool>;
                  })}
                </ToolGroup>
              ))}
              <PaintArea><PaintProxy /></PaintArea>
              <PaintModes>
                <PaintMode $on $bg={lime} aria-label="Color" />
                <PaintMode $bg="linear-gradient(90deg, #fff, #444)" aria-label="Gradient" />
                <PaintMode $bg="linear-gradient(135deg, #fff 42%, #d0142c 42%, #d0142c 58%, #fff 58%)" aria-label="None" />
              </PaintModes>
              <ScreenModeRow><ScreenMode aria-label="Screen mode" /></ScreenModeRow>
            </ToolPanel>
          </Dock>

          <Document>
            <RulerCorner />
            <HRuler />
            <VRuler />
            <Artwork />
            <ScrollColumn>
              <Up />
              <Spacer $grow={48} />
              <Thumb $w={11} $h={12} />
              <Spacer $grow={52} />
              <Down s={6} />
            </ScrollColumn>
            <StatusBar>
              <Combo $w={46} $h={11} $gap={8}>
                <select aria-label="Zoom" defaultValue="150%"><option>150%</option></select>
                <Down s={6} />
                <svg width="3" height="1" />
              </Combo>
              <svg width="9" height="9" viewBox="0 0 9 9" fill="#ddd" stroke="#555"><circle cx="4.500" cy="4.500" r="3.500" /><path d="M4 3v4l3 1" stroke="#222" /></svg>
              <StatusText>Open</StatusText>
              <Side s={5} />
              <ScrollRow>
                <Side left s={4} />
                <Spacer $grow={45} />
                <Thumb $w={12} $h={9} />
                <Spacer $grow={55} />
                <Side s={4} />
              </ScrollRow>
            </StatusBar>
            <Floating>
              <LayersPanel />
              <PathfinderPanel />
              <ColorPanel />
              <StrokePanel />
            </Floating>
          </Document>

          <Dock $w={26} aria-label="Collapsed panels">
            <DockHead $right><Chevrons /></DockHead>
            <RightGroup>
              <PanelGrip />
              <RightButton aria-label="Appearance"><svg width="12" height="12" viewBox="0 0 12 12"><circle cx="6" cy="6" r="5" fill="#fff" stroke="#333" /><circle cx="6" cy="6" r="3.500" fill="#333" /></svg></RightButton>
              <RightButton aria-label="Graphic styles"><svg width="12" height="12" viewBox="0 0 12 12" fill="#fff" stroke="#333"><path d="M3.500 1.500h8v8h-8z" /><path d="M.5 7.500h4v4h-4z" /></svg></RightButton>
            </RightGroup>
          </Dock>
        </Body>
        <TaskEdge />
        <Caption>Select "Rounded Rectangle Tool" from the tool bar. Draw two 2" by 2" Rounded Rectangles.</Caption>
      </Window>
    </>
  );
}
